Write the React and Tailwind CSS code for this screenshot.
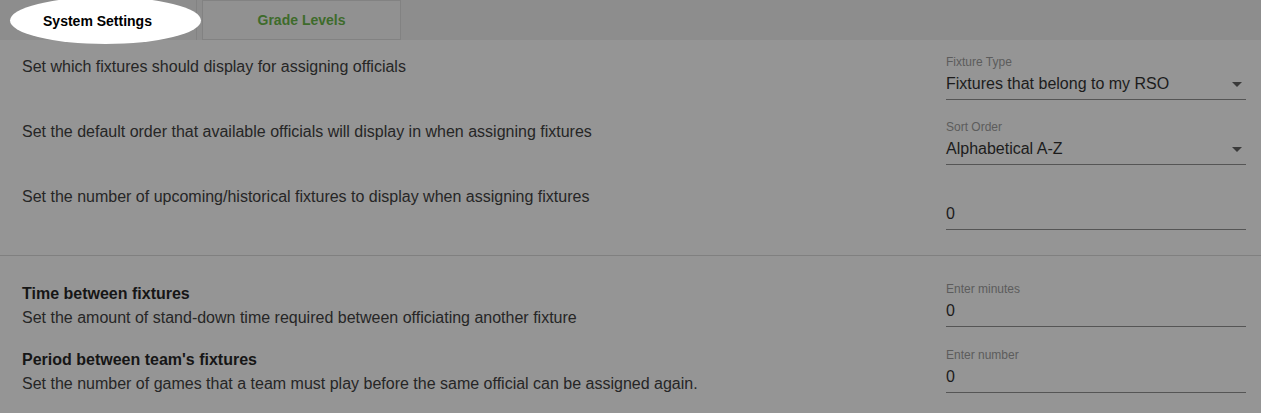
import React from "react";

const font = { fontFamily: '"Liberation Sans", Arial, sans-serif' };

function Caret() {
  return (
    <svg width="10" height="5" viewBox="0 0 10 5" className="shrink-0">
      <path d="M0 0 L10 0 L5 5 Z" fill="#3a3a3a" />
    </svg>
  );
}

function Field({ label, value, select }) {
  return (
    <div className="w-[300px] flex flex-col">
      <div className="h-[14px] text-[12px] leading-[14px] text-[#5c5c5c]">{label}</div>
      <div className="flex items-center justify-between h-[31px] pr-[4px] border-b border-[#555555]">
        <span className="text-[16px] leading-[20px] text-[#1c1c1c]">{value}</span>
        {select && <Caret />}
      </div>
    </div>
  );
}

function Row({ title, text, label, value, select, className }) {
  return (
    <div className={"flex justify-between pl-[22px] pr-[15px] " + (className || "")}>
      <div className="flex flex-col text-[16px] leading-[24px] text-[#262626]">
        {title && <div className="font-bold text-[#161616]">{title}</div>}
        <div>{text}</div>
      </div>
      <Field label={label} value={value} select={select} />
    </div>
  );
}

export default function App() {
  return (
    <main className="relative w-[1261px] h-[413px] overflow-hidden bg-[#959595]" style={font}>
      <div className="flex h-[40px] bg-[#8d8d8d]">
        <div className="w-[197px] border-r border-[#838383]" />
        <div className="ml-[5px] w-[199px] h-[40px] border border-[#828282] bg-[#919191] flex items-center justify-center text-[14px] font-bold text-[#3e6b2b]">
          Grade Levels
        </div>
      </div>

      <div className="absolute left-[10px] top-[-3px] w-[191px] h-[47px] rounded-[50%] bg-white flex items-center justify-center text-[14px] font-bold text-black">
        <span className="-ml-[16px] mt-[1px]">System Settings</span>
      </div>

      <div className="flex flex-col pt-[15px]">
        <Row
          text="Set which fixtures should display for assigning officials"
          label="Fixture Type"
          value="Fixtures that belong to my RSO"
          select
        />
        <Row
          className="mt-[20px]"
          text="Set the default order that available officials will display in when assigning fixtures"
          label="Sort Order"
          value="Alphabetical A-Z"
          select
        />
        <Row
          className="mt-[20px]"
          text="Set the number of upcoming/historical fixtures to display when assigning fixtures"
          label=""
          value="0"
        />
      </div>

      <div className="mt-[25px] border-t border-[#808080]" />

      <div className="flex flex-col pt-[26px]">
        <Row
          title="Time between fixtures"
          text="Set the amount of stand-down time required between officiating another fixture"
          label="Enter minutes"
          value="0"
        />
        <Row
          className="mt-[18px]"
          title="Period between team's fixtures"
          text="Set the number of games that a team must play before the same official can be assigned again."
          label="Enter number"
          value="0"
        />
      </div>
    </main>
  );
}
